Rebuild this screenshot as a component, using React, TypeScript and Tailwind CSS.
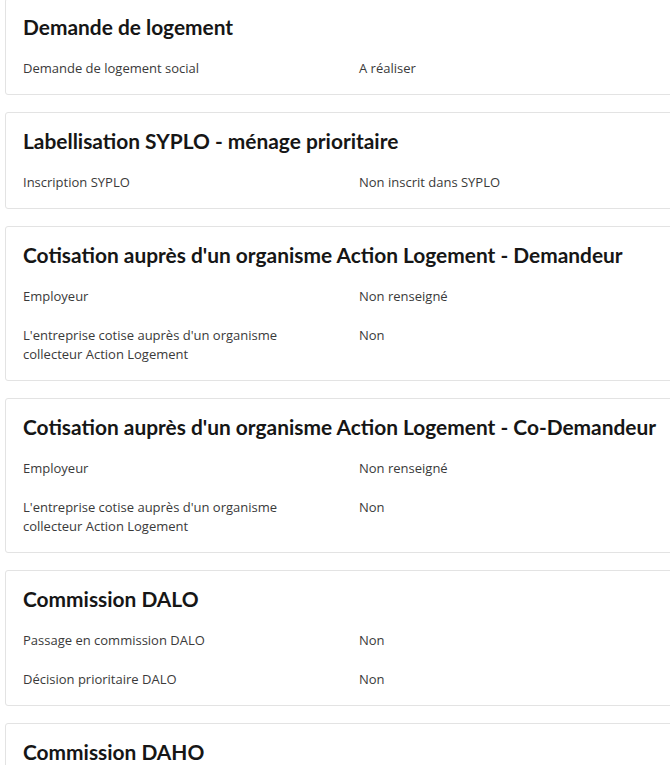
type Row = { label: string; value: string };
type Section = { title: string; rows: Row[] };

const sections: Section[] = [
  { title: "Demande de logement", rows: [{ label: "Demande de logement social", value: "A réaliser" }] },
  { title: "Labellisation SYPLO - ménage prioritaire", rows: [{ label: "Inscription SYPLO", value: "Non inscrit dans SYPLO" }] },
  {
    title: "Cotisation auprès d'un organisme Action Logement - Demandeur",
    rows: [
      { label: "Employeur", value: "Non renseigné" },
      { label: "L'entreprise cotise auprès d'un organisme collecteur Action Logement", value: "Non" },
    ],
  },
  {
    title: "Cotisation auprès d'un organisme Action Logement - Co-Demandeur",
    rows: [
      { label: "Employeur", value: "Non renseigné" },
      { label: "L'entreprise cotise auprès d'un organisme collecteur Action Logement", value: "Non" },
    ],
  },
  {
    title: "Commission DALO",
    rows: [
      { label: "Passage en commission DALO", value: "Non" },
      { label: "Décision prioritaire DALO", value: "Non" },
    ],
  },
  {
    title: "Commission DAHO",
    rows: [
      { label: "Passage en commission DAHO", value: "Non" },
      { label: "Décision prioritaire DAHO", value: "Non" },
    ],
  },
];

export default function App() {
  return (
    <div className="h-[765px] w-[670px] overflow-hidden bg-white">
      <div className="mt-[-2px] flex w-[710px] flex-col gap-[17px] pl-[5px]">
        {sections.map((s) => (
          <div key={s.title} className="rounded-[3px] border border-[#e3e3e3] bg-white pb-[16px] pl-[17px] pt-[14px]">
            <h2
              className="whitespace-nowrap text-[20.9px] font-bold leading-[28px] text-[#161616]"
              style={{ fontFamily: "Lato, sans-serif" }}
            >
              {s.title}
            </h2>
            <div className="mt-[18px] flex flex-col gap-[20px]">
              {s.rows.map((r) => (
                <div
                  key={r.label}
                  className="grid grid-cols-[336px_1fr] text-[13px] leading-[19px] text-[#3a3a3a]"
                  style={{ fontFamily: "'Open Sans', sans-serif" }}
                >
                  <div className="pr-[50px]">{r.label}</div>
                  <div>{r.value}</div>
                </div>
              ))}
            </div>
          </div>
        ))}
      </div>
    </div>
  );
}
